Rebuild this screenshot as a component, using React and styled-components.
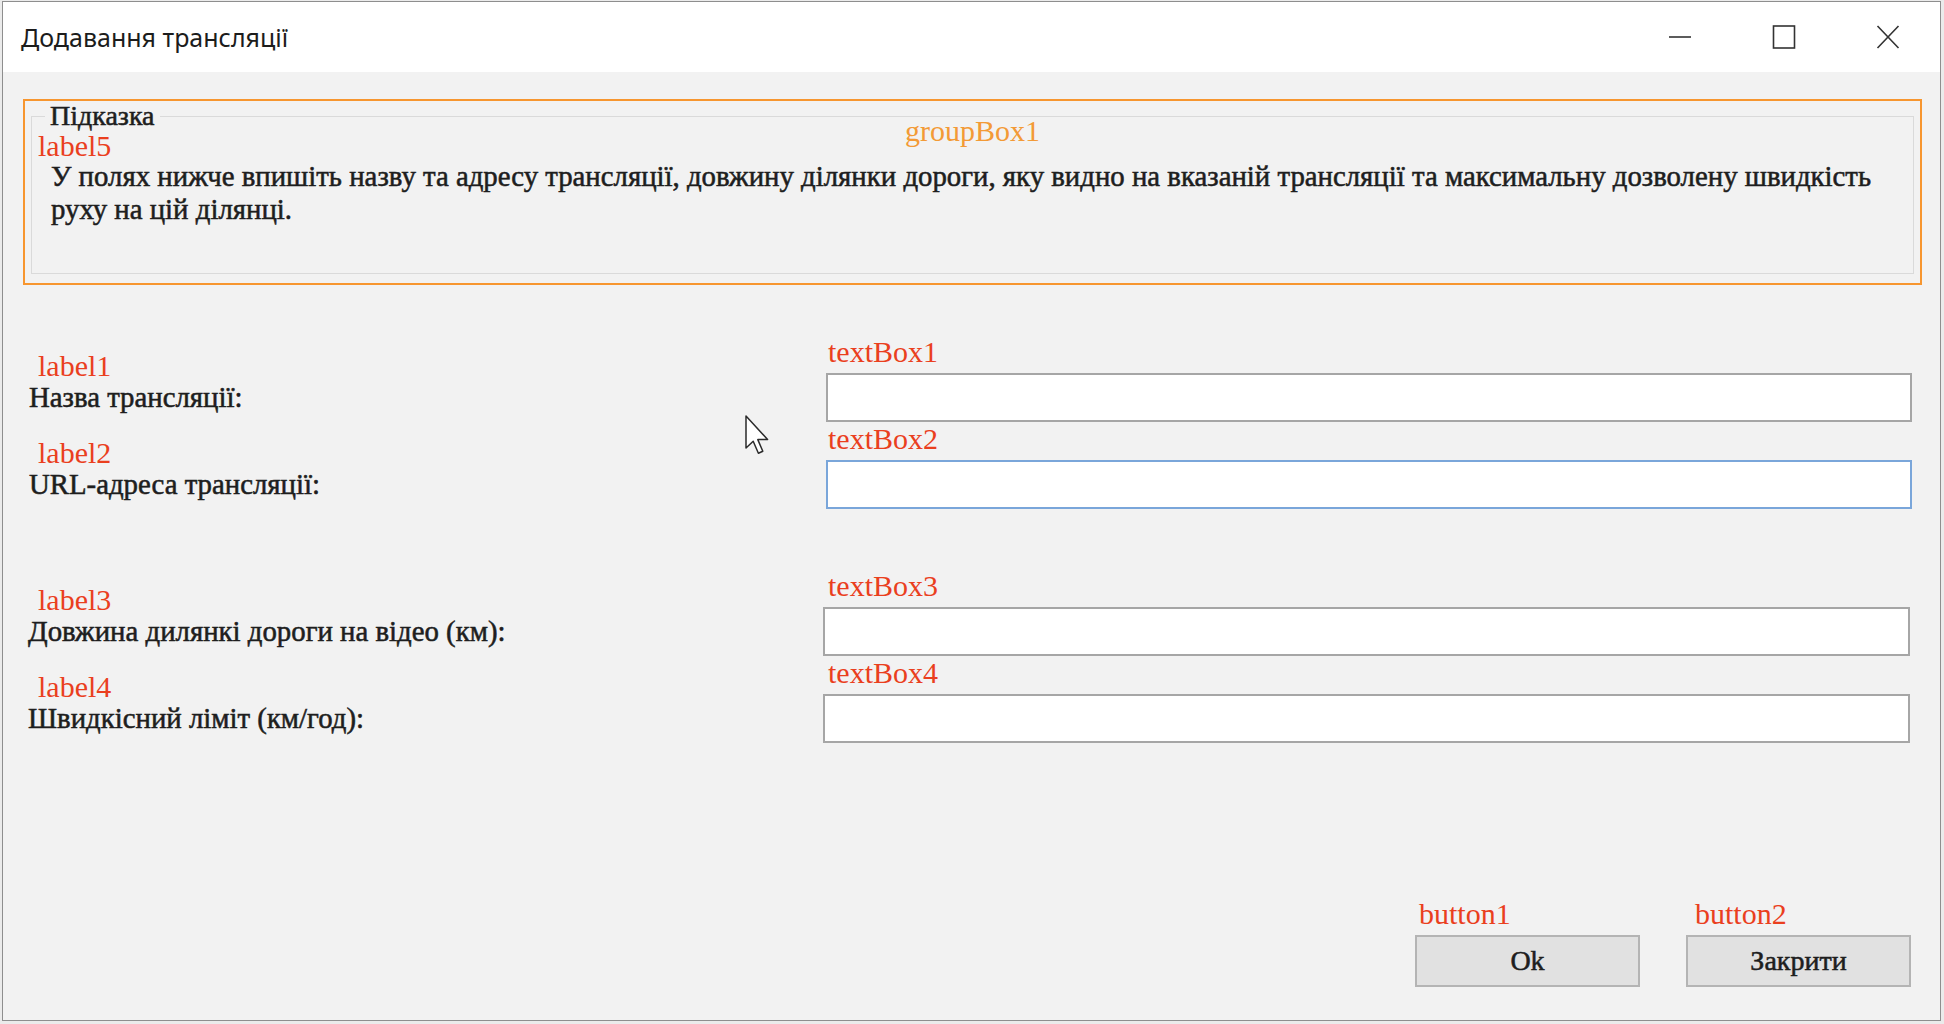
import React from 'react'
import styled, { createGlobalStyle } from 'styled-components'

const GlobalStyle = createGlobalStyle`
  html, body {
    margin: 0;
    padding: 0;
    background: #ebebeb;
  }
  body {
    font-family: "Liberation Serif", "Times New Roman", serif;
  }
`;

function App() {
    return (
        <>
        <GlobalStyle />
        <Window>
            <TitleBar>
                <Title>Додавання трансляції</Title>
                <Controls>
                    <CtrlButton>
                        <svg width="24" height="24" viewBox="0 0 24 24">
                            <line x1="1" y1="12" x2="23" y2="12" stroke="#333" strokeWidth="1.6" />
                        </svg>
                    </CtrlButton>
                    <CtrlButton>
                        <svg width="24" height="24" viewBox="0 0 24 24">
                            <rect x="1.5" y="1" width="21" height="22" fill="none" stroke="#333" strokeWidth="1.6" />
                        </svg>
                    </CtrlButton>
                    <CtrlButton>
                        <svg width="24" height="24" viewBox="0 0 24 24">
                            <path d="M1.5 1 L22.5 23 M22.5 1 L1.5 23" stroke="#333" strokeWidth="1.6" fill="none" />
                        </svg>
                    </CtrlButton>
                </Controls>
            </TitleBar>

            <Content>
                <HintFrame>
                    <DesignName>groupBox1</DesignName>
                    <HintBox>
                        <Legend>Підказка</Legend>
                        <RedTag>label5</RedTag>
                        <HintText>
                            У полях нижче впишіть назву та адресу трансляції, довжину ділянки дороги, яку видно на вказаній трансляції та максимальну дозволену швидкість
                            <br />
                            руху на цій ділянці.
                        </HintText>
                    </HintBox>
                </HintFrame>

                <Form>
                    <FormRow>
                        <LabelCell>
                            <RedTag $indent={10}>label1</RedTag>
                            <FieldLabel $shift={1}>Назва трансляції:</FieldLabel>
                        </LabelCell>
                        <InputCell>
                            <RedTag $indent={2} $below={5} $tall>textBox1</RedTag>
                            <TextBox />
                        </InputCell>
                    </FormRow>
                    <FormRow>
                        <LabelCell>
                            <RedTag $indent={10}>label2</RedTag>
                            <FieldLabel $shift={1}>URL-адреса трансляції:</FieldLabel>
                        </LabelCell>
                        <InputCell>
                            <RedTag $indent={2} $below={5} $tall>textBox2</RedTag>
                            <TextBox $focused />
                        </InputCell>
                    </FormRow>
                    <FormRow $top={60}>
                        <LabelCell>
                            <RedTag $indent={10}>label3</RedTag>
                            <FieldLabel>Довжина дилянкі дороги на відео (км):</FieldLabel>
                        </LabelCell>
                        <InputCell $shift={-3}>
                            <RedTag $indent={5} $below={5} $tall>textBox3</RedTag>
                            <TextBox />
                        </InputCell>
                    </FormRow>
                    <FormRow>
                        <LabelCell>
                            <RedTag $indent={10}>label4</RedTag>
                            <FieldLabel>Швидкісний ліміт (км/год):</FieldLabel>
                        </LabelCell>
                        <InputCell $shift={-3}>
                            <RedTag $indent={5} $below={5} $tall>textBox4</RedTag>
                            <TextBox />
                        </InputCell>
                    </FormRow>
                </Form>

                <ButtonBar>
                    <ButtonSlot>
                        <RedTag $indent={4} $below={6}>button1</RedTag>
                        <DlgButton>Ok</DlgButton>
                    </ButtonSlot>
                    <ButtonSlot>
                        <RedTag $indent={9} $below={6}>button2</RedTag>
                        <DlgButton>Закрити</DlgButton>
                    </ButtonSlot>
                </ButtonBar>
            </Content>

            <Cursor width="28" height="42" viewBox="0 0 14 21">
                <path d="M1 1 L1 17 L4.6 13.6 L7.2 19.6 L9.4 18.6 L6.9 12.8 L11.8 12.8 Z"
                    fill="#fff" stroke="#2b2b2b" strokeWidth="0.75" strokeLinejoin="round" />
            </Cursor>
        </Window>
        </>
    )
}

const Window = styled.div`
    position: relative;
    box-sizing: border-box;
    margin: 1px 0 0 2px;
    width: 1939px;
    height: 1020px;
    border: 1px solid #8e8e8e;
    background: #f2f2f2;
    display: flex;
    flex-direction: column;
`;

const TitleBar = styled.div`
    height: 70px;
    flex-shrink: 0;
    background: #ffffff;
    display: flex;
    align-items: center;
    padding-left: 18px;
`;

const Title = styled.div`
    font-family: "Noto Sans", "Open Sans", sans-serif;
    font-size: 25px;
    color: #1c1c1c;
`;

const Controls = styled.div`
    margin-left: auto;
    display: flex;
    height: 100%;
`;

const CtrlButton = styled.div`
    width: 104px;
    display: flex;
    align-items: center;
    justify-content: center;
`;

const Content = styled.div`
    flex: 1;
    display: flex;
    flex-direction: column;
    padding: 27px 18px 33px 20px;
`;

const HintFrame = styled.div`
    position: relative;
    box-sizing: border-box;
    height: 186px;
    border: 2px solid #f7962f;
    padding: 0 6px 9px 6px;
`;

const DesignName = styled.div`
    position: absolute;
    left: 880px;
    top: 13px;
    font-size: 30px;
    line-height: 33px;
    color: #f39a36;
`;

const HintBox = styled.fieldset`
    box-sizing: border-box;
    height: 100%;
    margin: 0;
    padding: 0 6px;
    min-width: 0;
    border: 1px solid #dadada;
`;

const Legend = styled.legend`
    margin-left: 7px;
    padding: 0 5px;
    font-size: 28px;
    line-height: 30px;
    color: #1e1e1e;
    -webkit-text-stroke: 0.55px #1e1e1e;
`;

const RedTag = styled.div`
    font-size: 30px;
    line-height: ${(props) => (props.$tall ? 33 : 30)}px;
    color: #ea3f1e;
    margin-left: ${(props) => props.$indent || 0}px;
    margin-bottom: ${(props) => props.$below || 0}px;
`;

const HintText = styled.div`
    margin: -1px 0 0 13px;
    font-size: 28.8px;
    line-height: 33px;
    white-space: nowrap;
    color: #1e1e1e;
    -webkit-text-stroke: 0.55px #1e1e1e;
`;

const Form = styled.div`
    margin-top: 50px;
    display: flex;
    flex-direction: column;
`;

const FormRow = styled.div`
    display: grid;
    grid-template-columns: 803px 1fr;
    align-items: end;
    margin-top: ${(props) => props.$top || 0}px;
`;

const LabelCell = styled.div`
    display: flex;
    flex-direction: column;
    padding: 0 0 8px 5px;
`;

const FieldLabel = styled.div`
    font-size: 28.8px;
    line-height: 33px;
    color: #1e1e1e;
    -webkit-text-stroke: 0.55px #1e1e1e;
    margin-left: ${(props) => props.$shift || 0}px;
`;

const InputCell = styled.div`
    display: flex;
    flex-direction: column;
    margin-left: ${(props) => props.$shift || 0}px;
    margin-right: ${(props) => 10 + (props.$shift ? -props.$shift - 1 : 0)}px;
`;

const TextBox = styled.div`
    box-sizing: border-box;
    height: 49px;
    background: #ffffff;
    border: 2px solid ${(props) => (props.$focused ? '#7aa6da' : '#a6a6a6')};
`;

const ButtonBar = styled.div`
    margin-top: auto;
    display: flex;
    justify-content: flex-end;
    gap: 46px;
    padding-right: 11px;
`;

const ButtonSlot = styled.div`
    display: flex;
    flex-direction: column;
`;

const DlgButton = styled.div`
    box-sizing: border-box;
    width: 225px;
    height: 52px;
    background: #e1e1e1;
    border: 2px solid #b4b4b4;
    display: flex;
    align-items: center;
    justify-content: center;
    font-size: 28px;
    color: #1e1e1e;
    -webkit-text-stroke: 0.55px #1e1e1e;
`;

const Cursor = styled.svg`
    position: absolute;
    left: 741px;
    top: 412px;
`;

export default App;
